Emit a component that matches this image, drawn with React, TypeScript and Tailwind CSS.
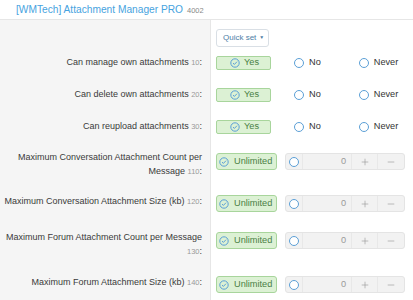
import { Plus, Minus } from 'lucide-react'

const font = { fontFamily: '"Liberation Sans", Arial, sans-serif' }

function CheckCircle() {
  return (
    <svg width="10" height="10" viewBox="0 0 10 10" className="shrink-0">
      <circle cx="5" cy="5" r="4.2" fill="none" stroke="#5b9fd6" strokeWidth="1" />
      <path d="M3 5.1 L4.4 6.4 L7 3.7" fill="none" stroke="#5b9fd6" strokeWidth="1" />
    </svg>
  )
}

function Radio() {
  return <span className="inline-block w-[10px] h-[10px] rounded-full border border-[#5b9fd6] bg-white shrink-0" />
}

function Label({ text, hint }: { text: string; hint: number }) {
  return (
    <>
      {text}
      <span className="inline-block ml-[2.5px]">
        <span className="text-[7.5px] text-[#999]">{hint}</span>:
      </span>
    </>
  )
}

function YesNoNever() {
  return (
    <div className="flex items-center">
      <div className="flex items-center h-[14px] w-[55px] border border-[#a8d59c] bg-[#dcf1d4] rounded-[2px] pl-[13px] gap-[4px] text-[9.2px] text-[#4a7f45]">
        <CheckCircle />
        <span>Yes</span>
      </div>
      <div className="flex items-center gap-[5px] ml-[23px] text-[9.2px] text-[#333]">
        <Radio />
        <span>No</span>
      </div>
      <div className="flex items-center gap-[5px] ml-[38px] text-[9.2px] text-[#333]">
        <Radio />
        <span>Never</span>
      </div>
    </div>
  )
}

function UnlimitedSpin() {
  return (
    <div className="flex items-center">
      <div className="flex items-center h-[17px] w-[61px] border border-[#a8d59c] bg-[#dcf1d4] rounded-[3px] pl-[2px] gap-[5px] text-[9.2px] text-[#4a7f45]">
        <CheckCircle />
        <span>Unlimited</span>
      </div>
      <div className="flex items-stretch h-[17px] w-[120px] ml-[8px] border border-[#e4e4e4] bg-[#f2f2f2] rounded-[3px] text-[#999]">
        <div className="w-[17px] flex items-center justify-center border-r border-[#e8e8e8]">
          <Radio />
        </div>
        <div className="w-[49px] flex items-center justify-end pr-[5px] text-[9.2px] border-r border-[#e8e8e8]">0</div>
        <div className="w-[26px] flex items-center justify-center border-r border-[#e8e8e8]">
          <Plus size={10} strokeWidth={1.5} color="#999" />
        </div>
        <div className="flex-1 flex items-center justify-center">
          <Minus size={10} strokeWidth={1.5} color="#999" />
        </div>
      </div>
    </div>
  )
}

export default function App() {
  const rows = [
    { text: 'Can manage own attachments', hint: 10, kind: 'yn', h: 'h-[31px]', lp: 'pt-[8px]', cp: 'pt-[8px]' },
    { text: 'Can delete own attachments', hint: 20, kind: 'yn', h: 'h-[32px]', lp: 'pt-[9px]', cp: 'pt-[9px]' },
    { text: 'Can reupload attachments', hint: 30, kind: 'yn', h: 'h-[32px]', lp: 'pt-[9px]', cp: 'pt-[9px]' },
    { text: 'Maximum Conversation Attachment Count per Message', hint: 110, kind: 'spin', h: 'h-[40px]', lp: 'pt-[8px]', cp: 'pt-[10px]' },
    { text: 'Maximum Conversation Attachment Size (kb)', hint: 120, kind: 'spin', h: 'h-[39px]', lp: 'pt-[12px]', cp: 'pt-[12px]' },
    { text: 'Maximum Forum Attachment Count per Message', hint: 130, kind: 'spin', h: 'h-[43px]', lp: 'pt-[9px]', cp: 'pt-[10px]' },
    { text: 'Maximum Forum Attachment Size (kb)', hint: 140, kind: 'spin', h: 'h-[35px]', lp: 'pt-[11px]', cp: 'pt-[11px]' },
  ]

  return (
    <div className="w-[413px] h-[300px] overflow-hidden bg-white" style={font}>
      <div className="h-[20px] border-b border-[#e6e6e6] pl-[16px] pt-[2px] flex items-baseline">
        <span className="text-[10.2px] text-[#47a3e0]">[WMTech] Attachment Manager PRO</span>
        <span className="text-[7.5px] text-[#888] ml-[4px]">4002</span>
      </div>

      <div className="flex h-[28px]">
        <div className="w-[211px] bg-[#f5f5f5] border-r border-[#e6e6e6]" />
        <div className="pl-[5px] pt-[9px]">
          <div className="flex items-center h-[18px] w-[53px] border border-[#d9dfe5] rounded-[3px] bg-white pl-[6px] gap-[3px] text-[8px] text-[#4c7ea6]">
            <span>Quick set</span>
            <span className="text-[5px]">▼</span>
          </div>
        </div>
      </div>

      {rows.map((r) => (
        <div key={r.hint} className={`flex ${r.h}`}>
          <div className={`w-[211px] shrink-0 bg-[#f5f5f5] border-r border-[#e6e6e6] text-right pr-[8px] pl-[3px] text-[9px] leading-[13.5px] text-[#3a3a3a] ${r.lp}`}>
            <Label text={r.text} hint={r.hint} />
          </div>
          <div className={`pl-[5px] ${r.cp}`}>
            {r.kind === 'yn' ? <YesNoNever /> : <UnlimitedSpin />}
          </div>
        </div>
      ))}
    </div>
  )
}
